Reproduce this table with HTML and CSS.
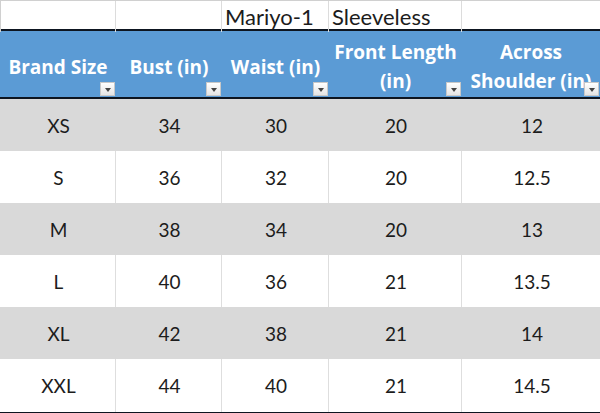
FILE: index.html
```html
<!DOCTYPE html>
<html>
<head>
<meta charset="utf-8">
<link rel="stylesheet" href="styles.css">
</head>
<body>
<div class="sheet">
  <div class="row top">
    <div class="cell"></div>
    <div class="cell"></div>
    <div class="cell title">Mariyo-1</div>
    <div class="cell title">Sleeveless</div>
    <div class="cell"></div>
  </div>
  <div class="row head">
    <div class="cell one">Brand Size<span class="filter"></span></div>
    <div class="cell one">Bust (in)<span class="filter"></span></div>
    <div class="cell one">Waist (in)<span class="filter"></span></div>
    <div class="cell two">Front Length<br>(in)<span class="filter"></span></div>
    <div class="cell two">Across<br>Shoulder (in)<span class="filter"></span></div>
  </div>
  <div class="row data shade"><div class="cell">XS</div><div class="cell">34</div><div class="cell">30</div><div class="cell">20</div><div class="cell">12</div></div>
  <div class="row data"><div class="cell">S</div><div class="cell">36</div><div class="cell">32</div><div class="cell">20</div><div class="cell">12.5</div></div>
  <div class="row data shade"><div class="cell">M</div><div class="cell">38</div><div class="cell">34</div><div class="cell">20</div><div class="cell">13</div></div>
  <div class="row data"><div class="cell">L</div><div class="cell">40</div><div class="cell">36</div><div class="cell">21</div><div class="cell">13.5</div></div>
  <div class="row data shade"><div class="cell">XL</div><div class="cell">42</div><div class="cell">38</div><div class="cell">21</div><div class="cell">14</div></div>
  <div class="row data"><div class="cell">XXL</div><div class="cell">44</div><div class="cell">40</div><div class="cell">21</div><div class="cell">14.5</div></div>
</div>
</body>
</html>
```

FILE: styles.css
```css
html, body {
  margin: 0;
  padding: 0;
  background: #ffffff;
}
.sheet {
  width: 600px;
  height: 413px;
  overflow: hidden;
  font-family: "Lato", "Open Sans", sans-serif;
  color: #1c1c1c;
  border-top: 1px solid #d0d0d0;
  box-sizing: border-box;
}
.row {
  display: grid;
  grid-template-columns: 116px 106px 107px 133px 138px;
}
.top {
  height: 28px;
  border-bottom: 2px solid #0d1520;
}
.top .cell {
  border-right: 1px solid #dcdcdc;
}
.top .cell:first-child {
  border-left: 1px solid #d0d0d0;
}
.top .cell:last-child {
  border-right: none;
}
.title {
  font-size: 22px;
  line-height: 31px;
  padding-left: 3px;
  white-space: nowrap;
}
.head {
  height: 66px;
  background: #5b9bd5;
  border-bottom: 2px solid #0d1520;
}
.head .cell {
  position: relative;
  overflow: hidden;
  color: #ffffff;
  font-family: "Open Sans", "Lato", sans-serif;
  font-weight: 700;
  font-size: 19px;
  display: flex;
  align-items: center;
  justify-content: center;
  text-align: center;
  white-space: nowrap;
  line-height: 29px;
}
.head .cell.one {
  padding-top: 6px;
}
.head .cell.two {
  padding-top: 5px;
}
.filter {
  position: absolute;
  right: 1px;
  bottom: 1px;
  width: 15px;
  height: 14px;
  background: linear-gradient(#ffffff, #e4e4e4);
  border: 1px solid #c8c8c8;
  box-sizing: border-box;
}
.filter::after {
  content: "";
  position: absolute;
  left: 4px;
  top: 5px;
  border-left: 3px solid transparent;
  border-right: 3px solid transparent;
  border-top: 4px solid #444444;
}
.data {
  height: 52px;
}
.data .cell {
  display: flex;
  align-items: center;
  justify-content: center;
  font-size: 19px;
  border-right: 1px solid #dedede;
  padding-left: 2px;
}
.data .cell:last-child {
  border-right: none;
}
.shade {
  background: #d9d9d9;
}
.shade .cell {
  border-right-color: #d9d9d9;
}
.data:last-child {
  border-bottom: 3px solid #0d1520;
  height: 53px;
}
```
